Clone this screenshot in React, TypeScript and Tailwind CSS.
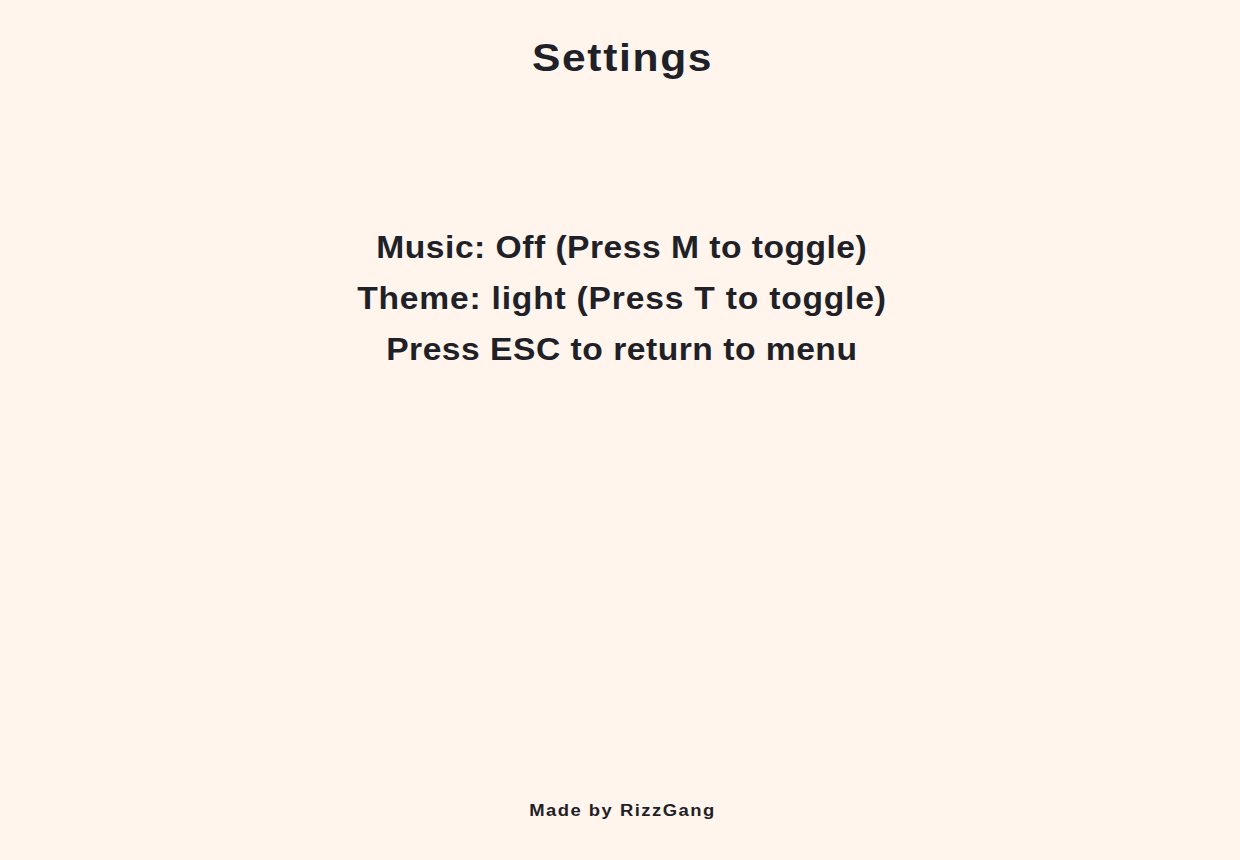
import React from "react";

export default function App() {
  return (
    <div
      className="w-[1240px] h-[860px] bg-[#fff5ec] text-[#1f2128] flex flex-col items-center pl-[4px]"
      style={{ fontFamily: '"Liberation Sans", Arial, sans-serif' }}
    >
      <h1 className="mt-[40px] text-[38px] leading-[37px] font-bold tracking-[1.5px] pl-[1.5px] scale-x-[1.12]">Settings</h1>
      <div className="mt-[145px] flex flex-col items-center text-[32px] font-bold leading-[51px] scale-x-[1.05]">
        <div className="tracking-[0.47px] pl-[0.47px]">Music: Off (Press M to toggle)</div>
        <div className="tracking-[0.76px] pl-[0.76px]">Theme: light (Press T to toggle)</div>
        <div className="tracking-[0.49px] pl-[0.49px]">Press ESC to return to menu</div>
      </div>
      <div className="mt-auto mb-[41px] text-[16px] leading-[16px] font-bold tracking-[1.3px] pl-[1.3px] scale-x-[1.15]">Made by RizzGang</div>
    </div>
  );
}
